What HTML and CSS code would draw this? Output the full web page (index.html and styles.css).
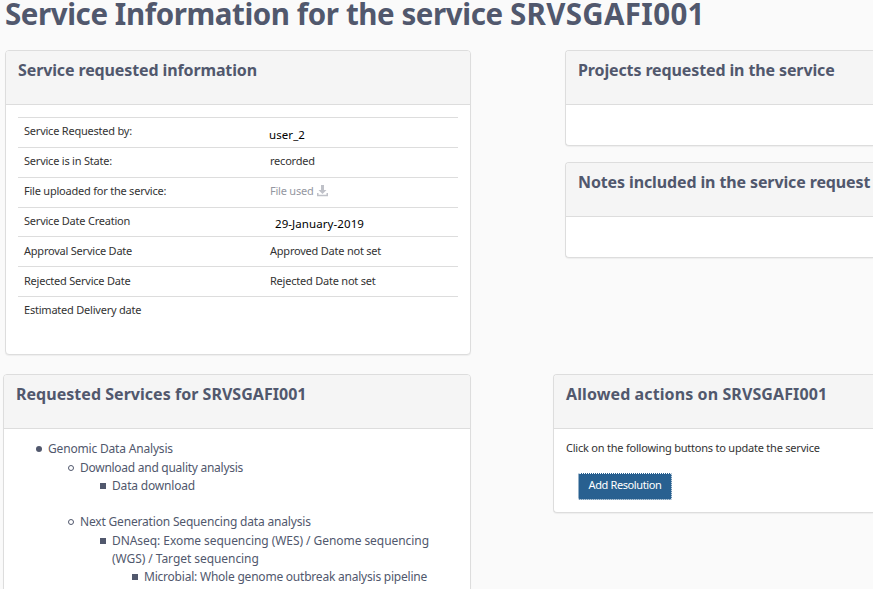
FILE: index.html
```
<!DOCTYPE html>
<html lang="en">
<head>
<meta charset="utf-8">
<title>Service Information</title>
<link rel="stylesheet" href="styles.css">
</head>
<body>
<h1 class="title">Service Information for the service <span class="code">SRVSGAFI001</span></h1>
<div class="row row-info">
  <section class="panel panel-info">
    <h3 class="panel-heading">Service requested information</h3>
    <div class="panel-body">
      <dl class="details">
        <div class="detail"><dt>Service Requested by:</dt><dd class="user">user_2</dd></div>
        <div class="detail"><dt>Service is in State:</dt><dd>recorded</dd></div>
        <div class="detail"><dt>File uploaded for the service:</dt><dd><a class="file">File used
          <svg class="download" viewBox="0 0 11 12" width="11" height="12"><path d="M4 0h3v5h2.5L5.5 9 1.5 5H4z"/><path d="M0 8h1.5v1.7h8V8H11v3.3H0z"/></svg></a></dd></div>
        <div class="detail detail-short"><dt>Service Date Creation</dt><dd class="date">29-January-2019</dd></div>
        <div class="detail detail-low"><dt>Approval Service Date</dt><dd>Approved Date not set</dd></div>
        <div class="detail detail-low"><dt>Rejected Service Date</dt><dd>Rejected Date not set</dd></div>
        <div class="detail"><dt>Estimated Delivery date</dt><dd></dd></div>
      </dl>
    </div>
  </section>
  <div class="side">
    <section class="panel panel-open">
      <h3 class="panel-heading">Projects requested in the service</h3>
      <div class="panel-empty"></div>
    </section>
    <section class="panel panel-open">
      <h3 class="panel-heading">Notes included in the service request</h3>
      <div class="panel-empty"></div>
    </section>
  </div>
</div>
<div class="row row-actions">
  <section class="panel panel-services">
    <h3 class="panel-heading heading-code">Requested Services for SRVSGAFI001</h3>
    <ul class="tree">
      <li class="disc">Genomic Data Analysis
        <ul>
          <li class="circle snug">Download and quality analysis
            <ul class="group-end"><li class="square download-item">Data download</li></ul>
          </li>
          <li class="circle">Next Generation Sequencing data analysis
            <ul>
              <li class="square wide">DNAseq: Exome sequencing (WES) / Genome sequencing<br>(WGS) / Target sequencing
                <ul><li class="square pipeline">Microbial: Whole genome outbreak analysis pipeline</li></ul>
              </li>
            </ul>
          </li>
        </ul>
      </li>
    </ul>
  </section>
  <section class="panel panel-open panel-actions">
    <h3 class="panel-heading heading-action">Allowed actions on SRVSGAFI001</h3>
    <div class="panel-body">
      <p class="hint">Click on the following buttons to update the service</p>
      <button class="btn">Add Resolution</button>
    </div>
  </section>
</div>
</body>
</html>
```
FILE: styles.css
```
*, *::before { box-sizing: border-box; }

body {
  margin: 0;
  height: 589px;
  overflow: hidden;
  background: #fafafa;
  color: #333;
  font: 11px/15px "Noto Sans", "Open Sans", sans-serif;
  letter-spacing: -0.22px;
}

h1, h3, p, dl, dd, ul { margin: 0; padding: 0; }

.title {
  height: 50px;
  padding-left: 5px;
  color: #51586d;
  font-size: 29.5px;
  font-weight: 700;
  line-height: 28px;
  letter-spacing: -0.42px;
  white-space: nowrap;
}
.title .code { letter-spacing: 0.35px; }

.row { display: flex; align-items: flex-start; }
.row-info { height: 324px; padding-left: 5px; gap: 94px; }
.row-actions { padding-left: 3px; gap: 82px; }

.panel {
  background: #fff;
  border: 1px solid #ddd;
  border-radius: 4px;
  box-shadow: 0 1px 1px rgba(0, 0, 0, .05);
  overflow: hidden;
}
.panel-open { border-right: 0; border-radius: 4px 0 0 4px; }
.panel-info { flex: none; width: 466px; height: 305px; }
.panel-services { flex: none; width: 468px; height: 240px; }
.panel-actions { flex: 1; min-width: 0; height: 139px; }
.side { display: flex; flex-direction: column; gap: 16px; flex: 1; min-width: 0; }

.panel-heading {
  height: 54px;
  padding: 8px 0 0 12px;
  background: #f5f5f5;
  border-bottom: 1px solid #ddd;
  color: #51586d;
  font-size: 16px;
  font-weight: 700;
  line-height: 22px;
  letter-spacing: -0.12px;
  white-space: nowrap;
}
.heading-code { letter-spacing: 0.03px; }
.heading-action { letter-spacing: 0.1px; }
.panel-body { padding: 12px; }
.panel-empty { height: 40px; }

.detail {
  display: grid;
  grid-template-columns: 246px 1fr;
  height: 30px;
  padding: 5px 6px 0;
  border-top: 1px solid #ddd;
}
.detail-short { height: 29px; }
.detail-low { padding-top: 6px; }

.user, .date {
  color: #000;
  font-size: 11.5px;
  letter-spacing: 0.08px;
}
.user { margin-left: -1px; padding-top: 4px; }
.date { margin-left: 5px; padding-top: 3px; }
.file { color: #9497a1; }
.download { fill: #bfc1c8; margin-left: 1px; vertical-align: -2px; }

.tree {
  padding: 11px 0 0 44px;
  color: #51586d;
  font-size: 12px;
  line-height: 18px;
  letter-spacing: -0.18px;
  white-space: nowrap;
}
.tree ul { padding-left: 32px; }
.tree li { list-style: none; }
.tree li::before {
  content: "";
  display: inline-block;
  width: 6px;
  height: 6px;
  margin: 0 6px 0 -12px;
  vertical-align: 1px;
  background: #51586d;
}
.tree .disc::before { border-radius: 50%; }
.tree .circle { padding-top: 1px; }
.tree .circle::before { border: 1px solid #51586d; border-radius: 50%; background: none; }
.tree .snug { letter-spacing: -0.27px; }
.tree .download-item { letter-spacing: -0.18px; }
.tree .group-end { padding-bottom: 17px; }
.tree .wide { padding-top: 1px; letter-spacing: -0.06px; }
.tree .pipeline { letter-spacing: -0.22px; }

.hint { margin: -1px 0 18px; }
.btn {
  display: block;
  width: 94px;
  height: 27px;
  margin-left: 12px;
  padding: 0 0 4px;
  background: #286090;
  border: 1px dotted #fff;
  border-radius: 2px;
  color: #fff;
  font: inherit;
  letter-spacing: -0.38px;
}
```
